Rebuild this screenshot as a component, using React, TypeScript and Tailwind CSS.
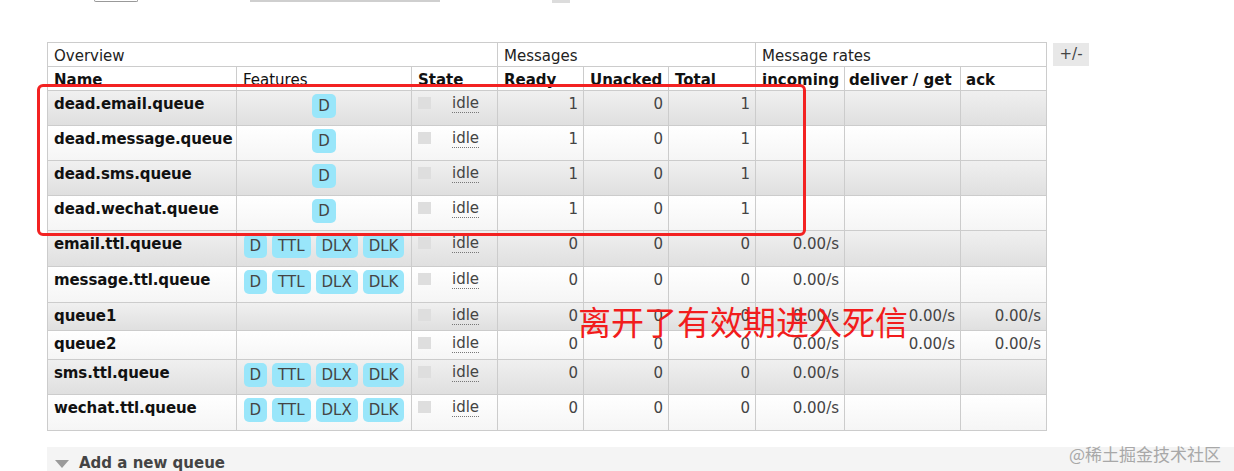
import React from "react";

type Queue = {
  name: string;
  features: string[];
  ready: number;
  unacked: number;
  total: number;
  incoming: string;
  deliver: string;
  ack: string;
  height: string;
};

const ttl = ["D", "TTL", "DLX", "DLK"];

const queues: Queue[] = [
  { name: "dead.email.queue", features: ["D"], ready: 1, unacked: 0, total: 1, incoming: "", deliver: "", ack: "", height: "h-[35px]" },
  { name: "dead.message.queue", features: ["D"], ready: 1, unacked: 0, total: 1, incoming: "", deliver: "", ack: "", height: "h-[35px]" },
  { name: "dead.sms.queue", features: ["D"], ready: 1, unacked: 0, total: 1, incoming: "", deliver: "", ack: "", height: "h-[35px]" },
  { name: "dead.wechat.queue", features: ["D"], ready: 1, unacked: 0, total: 1, incoming: "", deliver: "", ack: "", height: "h-[35px]" },
  { name: "email.ttl.queue", features: ttl, ready: 0, unacked: 0, total: 0, incoming: "0.00/s", deliver: "", ack: "", height: "h-[36px]" },
  { name: "message.ttl.queue", features: ttl, ready: 0, unacked: 0, total: 0, incoming: "0.00/s", deliver: "", ack: "", height: "h-[36px]" },
  { name: "queue1", features: [], ready: 0, unacked: 0, total: 0, incoming: "0.00/s", deliver: "0.00/s", ack: "0.00/s", height: "h-[28px]" },
  { name: "queue2", features: [], ready: 0, unacked: 0, total: 0, incoming: "0.00/s", deliver: "0.00/s", ack: "0.00/s", height: "h-[29px]" },
  { name: "sms.ttl.queue", features: ttl, ready: 0, unacked: 0, total: 0, incoming: "0.00/s", deliver: "", ack: "", height: "h-[35px]" },
  { name: "wechat.ttl.queue", features: ttl, ready: 0, unacked: 0, total: 0, incoming: "0.00/s", deliver: "", ack: "", height: "h-[36px]" },
];

const cell = "border border-[#cccccc] align-top pt-[4px] leading-[18px] whitespace-nowrap";
const num = `${cell} text-right pr-[5px] text-[#444]`;

function Badge({ label }: { label: string }) {
  return (
    <span className="inline-block h-[24px] leading-[24px] px-[6px] rounded-[5px] bg-[#99e6fa] text-[#444] -mt-[1px]">
      {label}
    </span>
  );
}

export default function App() {
  return (
    <div className="relative w-[1234px] h-[471px] overflow-hidden bg-white font-['DejaVu_Sans',sans-serif] text-[15px] text-[#222]">
      {/* cut-off filter controls at the top */}
      <div className="flex items-start h-[42px]">
        <div className="ml-[94px] w-[44px] h-[2px] border-x border-b border-[#999] rounded-b-[2px]" />
        <div className="ml-[112px] w-[190px] h-[2px] bg-[#cfcfcf]" />
        <div className="ml-[112px] w-[18px] h-[3px] bg-[#dcdcdc]" />
      </div>

      <div className="flex items-start ml-[47px]">
        <table className="table-fixed border-collapse w-[999px]">
          <colgroup>
            <col className="w-[189px]" />
            <col className="w-[175px]" />
            <col className="w-[86px]" />
            <col className="w-[86px]" />
            <col className="w-[85px]" />
            <col className="w-[87px]" />
            <col className="w-[89px]" />
            <col className="w-[116px]" />
            <col className="w-[86px]" />
          </colgroup>
          <thead>
            <tr className="h-[24px] bg-white">
              <th colSpan={3} className={`${cell} text-left font-normal pl-[6px]`}>Overview</th>
              <th colSpan={3} className={`${cell} text-left font-normal pl-[6px]`}>Messages</th>
              <th colSpan={3} className={`${cell} text-left font-normal pl-[6px]`}>Message rates</th>
            </tr>
            <tr className="h-[24px] bg-white text-[#111]">
              <th className={`${cell} text-left pl-[6px]`}>Name</th>
              <th className={`${cell} text-left font-normal pl-[6px]`}>Features</th>
              <th className={`${cell} text-left pl-[6px]`}>State</th>
              <th className={`${cell} text-left pl-[6px]`}>Ready</th>
              <th className={`${cell} text-left pl-[6px]`}>Unacked</th>
              <th className={`${cell} text-left pl-[6px]`}>Total</th>
              <th className={`${cell} text-left pl-[6px]`}>incoming</th>
              <th className={`${cell} text-left pl-[4px]`}>deliver / get</th>
              <th className={`${cell} text-left pl-[5px]`}>ack</th>
            </tr>
          </thead>
          <tbody>
            {queues.map((q, i) => (
              <tr
                key={q.name}
                className={`${q.height} ${
                  i % 2 === 0
                    ? "bg-gradient-to-b from-[#f0f0f0] to-[#dfdfdf]"
                    : "bg-gradient-to-b from-[#ffffff] to-[#f5f5f5]"
                }`}
              >
                <td className={`${cell} pl-[6px] font-bold text-[#111] tracking-[-0.1px]`}>{q.name}</td>
                <td className={`${cell} text-center`}>
                  {q.features.length > 0 && (
                    <span className="inline-flex gap-[5px]">
                      {q.features.map((f) => (
                        <Badge key={f} label={f} />
                      ))}
                    </span>
                  )}
                </td>
                <td className={`${cell} pl-[6px]`}>
                  <div className="flex items-start">
                    <span className="mt-[2px] w-[13px] h-[12px] bg-[#dedede]" />
                    <span className="ml-[21px] text-[#444] border-b border-dotted border-[#777] leading-[17px]">
                      idle
                    </span>
                  </div>
                </td>
                <td className={num}>{q.ready}</td>
                <td className={num}>{q.unacked}</td>
                <td className={num}>{q.total}</td>
                <td className={num}>{q.incoming}</td>
                <td className={num}>{q.deliver}</td>
                <td className={num}>{q.ack}</td>
              </tr>
            ))}
          </tbody>
        </table>
        <div className="ml-[6px] mt-[1px] w-[36px] h-[23px] leading-[23px] text-center bg-[#e8e8e8] text-[#444]">
          +/-
        </div>
      </div>

      <div className="mt-[16px] ml-[47px] h-[40px] bg-[#f4f4f4] flex items-start pt-[7px]">
        <span className="ml-[8px] mt-[6px] w-0 h-0 border-x-[7px] border-x-transparent border-t-[8px] border-t-[#9a9a9a]" />
        <span className="ml-[10px] font-bold text-[#444] leading-[18px]">Add a new queue</span>
      </div>

      {/* hand-drawn annotation */}
      <div className="absolute left-[37px] top-[84px] w-[769px] h-[152px] border-[3px] border-[#f32222] rounded-[6px]" />
      <div className="absolute left-[578px] top-[305px] font-['Noto_Sans_CJK_SC',sans-serif] text-[33px] leading-none text-[#f21c1c]">
        离开了有效期进入死信
      </div>
      <div className="absolute left-[1069px] top-[444px] font-['Noto_Sans_CJK_SC',sans-serif] text-[17px] leading-[20px] text-[#a8a8a8]">
        @稀土掘金技术社区
      </div>
    </div>
  );
}
